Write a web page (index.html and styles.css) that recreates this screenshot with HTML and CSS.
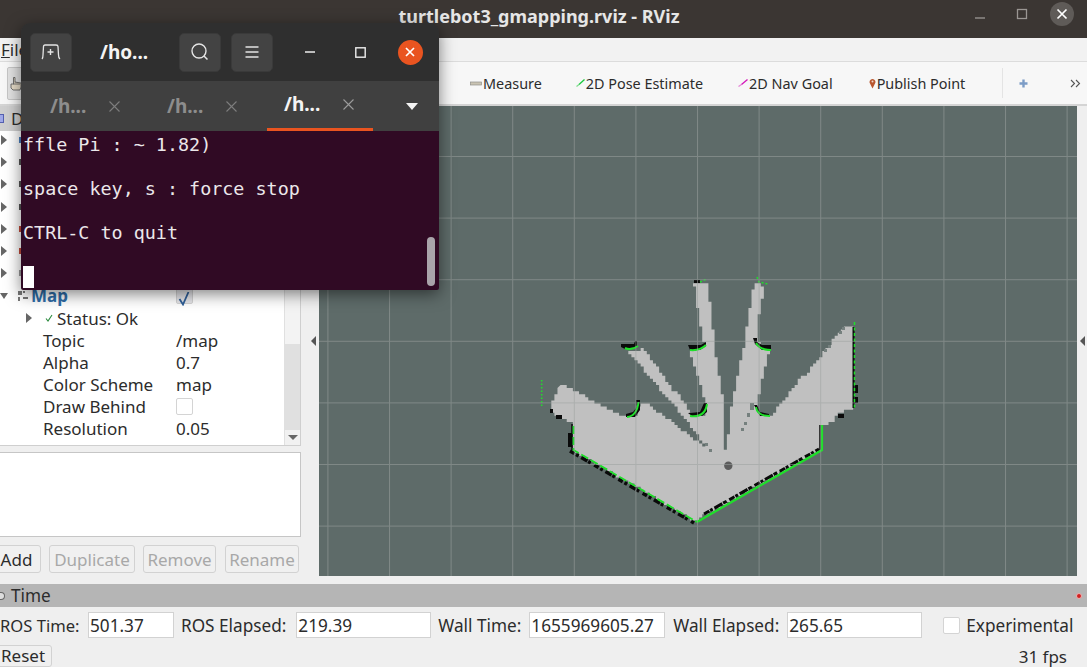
FILE: index.html
```html
<!DOCTYPE html>
<html lang="en">
<head>
  <meta charset="UTF-8">
  <title>turtlebot3_gmapping.rviz - RViz</title>
  <link rel="stylesheet" href="styles.css">
</head>
<body>

<header class="titlebar">
  <span class="titlebar-text">turtlebot3_gmapping.rviz - RViz</span>
  <div class="wm-buttons">
    <svg width="12" height="12" viewBox="0 0 12 12"><path d="M1 10H11" stroke="#8f8b88" stroke-width="1.5"/></svg>
    <svg width="12" height="12" viewBox="0 0 12 12"><rect x="1.5" y="1.5" width="9" height="9" fill="none" stroke="#9a9693" stroke-width="1.3"/></svg>
    <span class="wm-close">
      <svg width="12" height="12" viewBox="0 0 12 12"><path d="M1.5 1.5L10.5 10.5M10.5 1.5L1.5 10.5" stroke="#fff" stroke-width="1.7"/></svg>
    </span>
  </div>
</header>

<nav class="menubar"><span><u>F</u>ile</span></nav>

<div class="toolbar">
  <button class="tool-hand">
    <svg width="12" height="15" viewBox="0 0 12 15"><path d="M1 8V12L3 14H10L11 11V7L5 6V1.5H3.5V8.5M1 8H3.5M5 6.500V9M7 6.500V9M9 7V9" fill="#e6dcc8" stroke="#555" stroke-width=".8"/></svg>
  </button>
  <div class="tools">
    <span class="tool tool-measure">
      <svg width="12" height="5" viewBox="0 0 12 5"><rect x=".5" y="1" width="11" height="3" fill="#c9c3b2" stroke="#8f8f8a" stroke-width=".7"/></svg>
      Measure
    </span>
    <span class="tool">
      <svg width="9" height="8" viewBox="0 0 9 8"><path d="M.5 7.500L3 5.500" stroke="#7fdc8e" stroke-width="1.300"/><path d="M3 5.500L8.500 .5" stroke="#17c93c" stroke-width="1.300"/></svg>
      2D Pose Estimate
    </span>
    <span class="tool tool-nav">
      <svg width="10" height="8" viewBox="0 0 10 8"><path d="M.5 7.500L3.500 5.500" stroke="#e58ad8" stroke-width="1.300"/><path d="M3.500 5.500L9.500 .5" stroke="#d414b8" stroke-width="1.300"/></svg>
      2D Nav Goal
    </span>
    <span class="tool">
      <svg class="tool-pin" width="7" height="11" viewBox="0 0 7 11"><path d="M3.500 10.500L1 5.500A2.900 2.900 0 1 1 6 5.500Z" fill="#b8562e"/><circle cx="3.500" cy="3.500" r="1" fill="#f0d8c8"/></svg>
      Publish Point
    </span>
    <span class="tool-sep"></span>
    <svg class="tool-plus" width="9" height="9" viewBox="0 0 9 9"><path d="M4.500 .5V8.500M.5 4.500H8.500" stroke="#7c9cc6" stroke-width="2.400"/></svg>
    <svg class="tool-more" width="11" height="9" viewBox="0 0 11 9"><path d="M1 1L4.500 4.500L1 8M6 1L9.500 4.500L6 8" fill="none" stroke="#555" stroke-width="1.100"/></svg>
  </div>
</div>

<main class="main">
  <aside class="dock">
    <div class="dock-header"><span class="dock-icon"></span>D</div>

    <div class="tree">
      <div class="tree-body">
        <div class="tree-row"><span class="arrow-right"></span><span class="peek peek-blue"></span></div>
        <div class="tree-row"><span class="arrow-right"></span><span class="peek"></span></div>
        <div class="tree-row"><span class="arrow-right"></span><span class="peek"></span></div>
        <div class="tree-row"><span class="arrow-right"></span><span class="peek"></span></div>
        <div class="tree-row"><span class="arrow-right"></span><span class="peek peek-red"></span></div>
        <div class="tree-row"><span class="arrow-right"></span><span class="peek peek-red"></span></div>
        <div class="tree-row"><span class="arrow-right"></span><span class="peek peek-grey"></span></div>

        <div class="tree-row tree-row-map">
          <div class="tree-label">
            <span class="arrow-down"></span>
            <svg class="map-icon" width="10" height="10" viewBox="0 0 10 10"><path d="M0 0H4V4H0ZM5 0H7V2H5ZM0 6H2V10H0ZM5 6H10V8H5Z" fill="#777"/></svg>
            <span class="map-name">Map</span>
          </div>
          <span class="check check-on">
            <svg width="14" height="14" viewBox="0 0 14 14"><path d="M2.500 7L6 12.500L11.500 0" fill="none" stroke="#2f5f98" stroke-width="1.800"/></svg>
          </span>
        </div>
        <div class="tree-row">
          <div class="tree-label tree-label-status">
            <span class="arrow-right"></span>
            <svg class="status-icon" width="8" height="8" viewBox="0 0 8 8"><path d="M1 4.500L3 7L7 1" fill="none" stroke="#2b8a3e" stroke-width="1.100"/></svg>
            Status: Ok
          </div>
        </div>
        <div class="tree-row"><div class="tree-label tree-label-prop">Topic</div><span class="tree-value">/map</span></div>
        <div class="tree-row"><div class="tree-label tree-label-prop">Alpha</div><span class="tree-value">0.7</span></div>
        <div class="tree-row"><div class="tree-label tree-label-prop">Color Scheme</div><span class="tree-value">map</span></div>
        <div class="tree-row"><div class="tree-label tree-label-prop">Draw Behind</div><span class="check"></span></div>
        <div class="tree-row"><div class="tree-label tree-label-prop">Resolution</div><span class="tree-value">0.05</span></div>
        <div class="tree-row"><div class="tree-label tree-label-prop">Width</div><span class="tree-value">384</span></div>
      </div>
      <div class="scroll">
        <div class="scroll-thumb"></div>
        <div class="scroll-track"></div>
        <div class="scroll-btn"><span class="arrow-scroll"></span></div>
      </div>
    </div>

    <div class="description"></div>

    <div class="dock-buttons">
      <button class="btn btn-add">Add</button>
      <button class="btn btn-dup" disabled>Duplicate</button>
      <button class="btn btn-rem" disabled>Remove</button>
      <button class="btn btn-ren" disabled>Rename</button>
    </div>
  </aside>

  <div class="splitter"><span class="arrow-left"></span></div>

  <section class="viewport">
    <svg width="758" height="470" viewBox="319 106 758 470">
      <defs>
        <pattern id="grid" patternUnits="userSpaceOnUse" x="697" y="464" width="61.600" height="61.600">
          <path d="M0 .5H61.600M.5 0V61.600" stroke="#9aa09f" stroke-width="1" stroke-opacity=".55" fill="none"/>
        </pattern>
      </defs>

      <g class="map-cells">
        <path id="map-fill" fill="#c0c0c0"/>

        <!-- unknown cells left inside the free space -->
        <g fill="#75807e">
          <rect x="741" y="428" width="3" height="3"/>
          <rect x="744" y="422" width="3" height="3"/>
          <rect x="747" y="413" width="3" height="4"/>
          <rect x="750" y="403" width="4" height="7"/>
          <rect x="705" y="443" width="3" height="3"/>
          <rect x="709" y="449" width="3" height="3"/>
          <rect x="842" y="327" width="3" height="3"/>
          <rect x="839" y="331" width="3" height="3"/>
          <rect x="828" y="345" width="3" height="3"/>
          <rect x="824" y="349" width="3" height="3"/>
        </g>

        <!-- occupied cells -->
        <g fill="#0a0a0a">
          <path d="M621 344H634L635 341H637V346L632 349H625L621 347Z"/>
          <path d="M688 345H701L706 342V346L700 350H690Z"/>
          <path d="M753 338H757V342L762 345H771V350H762L755 344Z"/>
          <path d="M636 400H640V410L635 417H626V414L633 412L637 407Z"/>
          <path d="M688 413L700 412L704 403H707V412L702 416H692Z"/>
          <path d="M754 405H757L760 412L769 414V416H760Z"/>
          <rect x="694" y="280" width="6" height="3"/>
          <rect x="550" y="409" width="3" height="4"/>
          <rect x="556" y="415" width="6" height="4"/>
          <rect x="838" y="414" width="6" height="4"/>
          <rect x="568" y="433" width="4" height="14"/>
          <rect x="855" y="385" width="3" height="8"/>
          <rect x="855" y="397" width="3" height="6"/>
        </g>
        <g fill="none" stroke="#0a0a0a">
          <path d="M570 451L694 523" stroke-width="3.500" stroke-dasharray="5 2 3 3 7 1 3 4"/>
          <path d="M704 514L819 449" stroke-width="3" stroke-dasharray="6 1 3 2 9 1 4 3"/>
          <path d="M572 424V450" stroke-width="1.500"/>
          <path d="M853.500 327V408" stroke-width="2"/>
          <path d="M820 425V450" stroke-width="1.500"/>
        </g>

        <!-- laser scan -->
        <g fill="none" stroke="#1fe02a">
          <path d="M573.500 426V450L697 522" stroke-width="1.800" stroke-dasharray="8 3"/>
          <path d="M697 522L822 450V425" stroke-width="2.200"/>
          <path d="M854.500 322V408" stroke-width="1.500" stroke-dasharray="3 2.500"/>
          <path d="M541.700 380V408" stroke-width="1.500" stroke-dasharray="1.500 2"/>
          <path d="M625 348Q631 351 638 346" stroke-width="2"/>
          <path d="M690 350Q700 351 706 345" stroke-width="2"/>
          <path d="M756 343Q760 350 771 350" stroke-width="2"/>
          <path d="M627 417Q637 416 638.500 402" stroke-width="2"/>
          <path d="M690 416Q705 418 707 404" stroke-width="2"/>
          <path d="M756 407Q757 416 770 416" stroke-width="2"/>
          <path d="M700 282L707 279" stroke-width="1.500" stroke-dasharray="2 2"/>
          <path d="M757 277L759 282L768 284" stroke-width="1.500" stroke-dasharray="2 2"/>
        </g>

        <circle cx="728.300" cy="465.700" r="4.200" fill="#5c5c5c"/>
      </g>

      <rect x="319" y="106" width="758" height="470" fill="url(#grid)"/>
    </svg>
  </section>

  <div class="right-strip"><span class="arrow-left"></span></div>
</main>

<section class="time-panel">
  <div class="time-header">
    <span class="time-dot"></span>
    <span class="time-title">Time</span>
    <span class="time-close"></span>
  </div>
  <div class="time-row">
    <span class="time-label time-label-first">ROS Time:</span><div class="field field-ros">501.37</div>
    <span class="time-label">ROS Elapsed:</span><div class="field field-elapsed">219.39</div>
    <span class="time-label">Wall Time:</span><div class="field field-wall">1655969605.27</div>
    <span class="time-label time-label-wide">Wall Elapsed:</span><div class="field">265.65</div>
    <span class="check check-exp"></span><span class="time-label time-label-exp">Experimental</span>
  </div>
  <div class="bottom-row">
    <button class="btn btn-reset">Reset</button>
    <span class="fps">31 fps</span>
  </div>
</section>

<!-- terminal floats above the rviz window -->
<div class="terminal">
  <div class="term-head">
    <button class="term-btn">
      <svg width="20" height="18" viewBox="0 0 20 18"><path d="M1 16Q2 15 2 12L2.500 3.500Q2.500 2 4 2H15Q17 2 17 3.500L17.500 12Q17.500 15 19 16" fill="none" stroke="#e4e4e4" stroke-width="1.300"/><path d="M9.500 6V12M6.500 9H12.500" stroke="#e4e4e4" stroke-width="1.400"/></svg>
    </button>
    <span class="term-title">/ho...</span>
    <button class="term-btn term-search">
      <svg width="20" height="20" viewBox="0 0 20 20"><circle cx="9" cy="9" r="7" fill="none" stroke="#e4e4e4" stroke-width="1.400"/><path d="M14 14L17.500 17.500" stroke="#e4e4e4" stroke-width="1.500"/></svg>
    </button>
    <button class="term-btn term-menu">
      <svg width="14" height="12" viewBox="0 0 14 12"><path d="M.5 1H13.500M.5 6H13.500M.5 11H13.500" stroke="#e4e4e4" stroke-width="1.700"/></svg>
    </button>
    <div class="term-wm">
      <span class="term-wm-btn"><svg width="12" height="4" viewBox="0 0 12 4"><path d="M1 2H11" stroke="#eee" stroke-width="1.400"/></svg></span>
      <span class="term-wm-btn"><svg width="11" height="11" viewBox="0 0 11 11"><rect x=".8" y=".8" width="9.400" height="9.400" fill="none" stroke="#eee" stroke-width="1.400"/></svg></span>
      <span class="term-wm-btn">
        <span class="term-close"><svg width="10" height="10" viewBox="0 0 10 10"><path d="M1 1L9 9M9 1L1 9" stroke="#fff" stroke-width="1.700"/></svg></span>
      </span>
    </div>
  </div>

  <div class="term-tabs">
    <div class="term-tab"><span class="term-tab-name">/h...</span><svg width="11" height="11" viewBox="0 0 11 11"><path d="M.5 .5L10.500 10.500M10.500 .5L.5 10.500" stroke="#7d7d7d" stroke-width="1.100"/></svg></div>
    <div class="term-tab"><span class="term-tab-name">/h...</span><svg width="11" height="11" viewBox="0 0 11 11"><path d="M.5 .5L10.500 10.500M10.500 .5L.5 10.500" stroke="#7d7d7d" stroke-width="1.100"/></svg></div>
    <div class="term-tab term-tab-active"><span class="term-tab-name">/h...</span><svg width="11" height="11" viewBox="0 0 11 11"><path d="M.5 .5L10.500 10.500M10.500 .5L.5 10.500" stroke="#9a9a9a" stroke-width="1.100"/></svg></div>
    <span class="term-drop"></span>
  </div>

  <div class="term-body">
    <pre class="term-text">ffle Pi : ~ 1.82)

space key, s : force stop

CTRL-C to quit

<span class="term-cursor"></span></pre>
    <span class="term-scroll"></span>
  </div>
</div>

<script src="map.js"></script>
</body>
</html>
```

FILE: styles.css
```css
* {
  box-sizing: border-box;
}
html, body {
  margin: 0;
  padding: 0;
}
body {
  position: relative;
  width: 1087px;
  height: 667px;
  overflow: hidden;
  display: flex;
  flex-direction: column;
  font-family: "Noto Sans", "Open Sans", sans-serif;
  font-size: 17px;
  color: #2c2c2c;
  background-color: #efefef;
}
button {
  font-family: inherit;
  font-size: inherit;
  padding: 0;
}

/* rviz window frame */
.titlebar {
  position: relative;
  flex: none;
  height: 38px;
  display: flex;
  align-items: center;
  justify-content: center;
  background-color: #3b3633;
}
.titlebar-text {
  margin: 0 9px 6px 0;
  font-size: 18px;
  font-weight: 700;
  color: #e6e6e6;
}
.wm-buttons {
  position: absolute;
  right: 13px;
  top: 2px;
  display: flex;
  align-items: center;
  gap: 30px;
}
.wm-close {
  width: 24px;
  height: 24px;
  margin-left: -8px;
  border-radius: 50%;
  display: flex;
  align-items: center;
  justify-content: center;
  background-color: #5f5b58;
}
.menubar {
  flex: none;
  height: 24px;
  padding-left: 1px;
  line-height: 24px;
  background-color: #f2f2f2;
  border-bottom: 1px solid #dcdcdc;
}
.toolbar {
  flex: none;
  height: 44px;
  padding-left: 7px;
  display: flex;
  align-items: center;
  background-color: #f7f7f7;
  border-bottom: 2px solid #d4d4d4;
}
.tool-hand {
  width: 30px;
  height: 33px;
  display: flex;
  align-items: center;
  padding-left: 2px;
  background-color: #e2e2e2;
  border: 1px solid #c6c6c6;
  border-radius: 2px;
}
.tools {
  margin-left: 433px;
  display: flex;
  align-items: center;
}
.tool {
  display: flex;
  align-items: center;
  gap: 1px;
  margin-right: 35px;
  font-size: 14.400px;
  white-space: nowrap;
}
.tool-measure {
  margin-right: 34px;
}
.tool-nav {
  margin-right: 34px;
}
.tool-pin {
  margin-left: 2px;
}
.tool-sep {
  width: 1px;
  height: 30px;
  margin-left: 2px;
  background-color: #e4e4e4;
}
.tool-plus {
  margin-left: 16px;
}
.tool-more {
  margin-left: 42px;
}

/* main area */
.main {
  flex: none;
  height: 470px;
  display: flex;
}
.dock {
  flex: none;
  width: 301px;
  display: flex;
  flex-direction: column;
}
.dock-header {
  height: 25px;
  display: flex;
  align-items: center;
  gap: 7px;
  background-color: #cfcfcf;
}
.dock-icon {
  width: 4px;
  height: 9px;
  background-color: #9fa8e8;
  border: 1px solid #5560b0;
  border-left: none;
}
.tree {
  height: 315px;
  display: flex;
  overflow: hidden;
  background-color: #fff;
  border-bottom: 1px solid #cfcfcf;
  border-right: 1px solid #cfcfcf;
}
.tree-body {
  flex: 1;
  margin-top: -2px;
  overflow: hidden;
}
.tree-row {
  position: relative;
  height: 22.200px;
  display: grid;
  grid-template-columns: 176px 1fr;
  align-items: center;
}
.tree-label {
  display: flex;
  align-items: center;
  white-space: nowrap;
}
.tree-label-prop {
  padding-left: 43px;
}
.tree-label-status {
  padding-left: 26px;
}
.status-icon {
  margin: 0 4px 0 13px;
}
.tree-row-map .tree-label {
  font-weight: 700;
}
.map-icon {
  margin: 0 3px 0 10px;
}
.map-name {
  color: #2f6da8;
}
.arrow-right {
  width: 0;
  height: 0;
  margin-left: 1px;
  border-left: 6px solid #666;
  border-top: 5px solid transparent;
  border-bottom: 5px solid transparent;
}
.tree-label-status .arrow-right {
  margin-left: 0;
}
.arrow-down {
  width: 0;
  height: 0;
  border-top: 6px solid #666;
  border-left: 4px solid transparent;
  border-right: 4px solid transparent;
}
.peek {
  position: absolute;
  left: 19px;
  top: 8px;
  width: 2px;
  height: 6px;
  background-color: #555;
}
.peek-blue {
  background-color: #4a7fc0;
}
.peek-red {
  background-color: #c24a3a;
}
.peek-grey {
  background-color: #999;
}
.check {
  width: 17px;
  height: 17px;
  display: block;
  background-color: #fff;
  border: 1px solid #d4d4d4;
  border-radius: 2px;
}
.check-on {
  background-color: #e6e6ea;
}
.scroll {
  flex: none;
  width: 16px;
  display: flex;
  flex-direction: column;
  border-left: 1px solid #e0e0e0;
}
.scroll-thumb {
  height: 213px;
  background-color: #f3f3f3;
}
.scroll-track {
  height: 86px;
  background-color: #e0e0e0;
}
.scroll-btn {
  flex: 1;
  display: flex;
  align-items: center;
  justify-content: center;
  background-color: #f1f1f1;
}
.arrow-scroll {
  width: 0;
  height: 0;
  border-top: 5px solid #666;
  border-left: 5px solid transparent;
  border-right: 5px solid transparent;
}
.description {
  height: 85px;
  margin-top: 6px;
  background-color: #fff;
  border: 1px solid #c6c6c6;
  border-left: none;
}
.dock-buttons {
  display: flex;
  gap: 8px;
  margin-top: 8px;
}
.btn {
  height: 28px;
  color: #2c2c2c;
  font-size: 17px;
  background-color: #f0f0f0;
  border: 1px solid #d2d2d2;
  border-radius: 3px;
}
.btn:disabled {
  color: #a8a8a8;
}
.btn-add {
  width: 49px;
  margin-left: -8px;
}
.btn-dup {
  width: 86px;
}
.btn-rem {
  width: 73px;
}
.btn-ren {
  width: 74px;
  margin-left: 1px;
}
.splitter {
  flex: none;
  width: 18px;
  display: flex;
  align-items: center;
  justify-content: flex-end;
  padding-right: 3px;
}
.arrow-left {
  width: 0;
  height: 0;
  border-right: 5px solid #555;
  border-top: 5px solid transparent;
  border-bottom: 5px solid transparent;
}
.viewport {
  flex: none;
  width: 758px;
  height: 470px;
  background-color: #5e6b69;
}
.viewport svg {
  display: block;
}
.map-cells {
  filter: blur(.35px);
}
.right-strip {
  flex: 1;
  display: flex;
  align-items: center;
  justify-content: center;
}

/* time panel */
.time-panel {
  flex: none;
  margin-top: 8px;
  font-size: 17.200px;
}
.time-header {
  height: 23px;
  display: flex;
  align-items: center;
  background-color: #b5b5b5;
}
.time-dot {
  width: 5px;
  height: 8px;
  border: 1px solid #666;
  border-left: none;
  border-radius: 0 4px 4px 0;
  background-color: #ddd;
}
.time-title {
  margin-left: 6px;
}
.time-close {
  width: 6px;
  height: 6px;
  margin-left: auto;
  margin-right: 5px;
  border-radius: 50%;
  background-color: #d02020;
  border: 1px solid #f0b0b0;
}
.time-row {
  height: 26px;
  margin-top: 5px;
  display: flex;
  align-items: center;
  white-space: nowrap;
}
.time-label {
  margin-left: 7px;
}
.time-label-first {
  width: 80px;
  margin-left: 0;
  font-size: 16.600px;
}
.time-label-wide {
  margin-left: 8px;
}
.time-label-exp {
  margin-left: 6px;
}
.field {
  width: 135px;
  height: 26px;
  margin-left: 8px;
  padding-left: 1px;
  line-height: 25px;
  background-color: #fff;
  border: 1px solid #d2d2d2;
}
.field-ros {
  width: 86px;
}
.field-elapsed {
  margin-left: 10px;
}
.field-wall {
  width: 136px;
}
.check-exp {
  margin-left: 21px;
}
.bottom-row {
  height: 22px;
  margin-top: 7px;
  display: flex;
  align-items: center;
  justify-content: space-between;
}
.btn-reset {
  width: 58px;
  height: 22px;
  margin-left: -6px;
  line-height: 18px;
}
.fps {
  margin-right: 20px;
  font-size: 17px;
}

/* terminal window */
.terminal {
  position: absolute;
  left: 21px;
  top: 23px;
  width: 418px;
  height: 267px;
  display: flex;
  flex-direction: column;
  overflow: hidden;
  border-radius: 9px 9px 2px 2px;
  box-shadow: 0 4px 16px rgba(0, 0, 0, .5);
}
.term-head {
  flex: none;
  height: 58px;
  padding-left: 9px;
  display: flex;
  align-items: center;
  background-color: #2f2f2f;
}
.term-btn {
  width: 42px;
  height: 39px;
  display: flex;
  align-items: center;
  justify-content: center;
  background-color: #434343;
  border: 1px solid #3a3a3a;
  border-radius: 5px;
}
.term-title {
  width: 79px;
  margin-left: 28px;
  font-size: 19px;
  font-weight: 700;
  color: #f4f4f4;
}
.term-menu {
  margin-left: 10px;
}
.term-wm {
  margin-left: auto;
  padding-right: 4px;
  display: flex;
}
.term-wm-btn {
  width: 50px;
  display: flex;
  align-items: center;
  justify-content: center;
}
.term-close {
  width: 25px;
  height: 25px;
  border-radius: 50%;
  display: flex;
  align-items: center;
  justify-content: center;
  background-color: #e95420;
}
.term-tabs {
  flex: none;
  height: 50px;
  padding-left: 12px;
  display: flex;
  gap: 11px;
  background-color: #404040;
}
.term-tab {
  width: 106px;
  padding-left: 17px;
  display: flex;
  align-items: center;
  color: #8d8d8d;
  font-size: 19px;
  font-weight: 700;
}
.term-tab-name {
  width: 59px;
  margin-bottom: 1px;
}
.term-tab-active {
  color: #f4f4f4;
  border-bottom: 3px solid #e95420;
}
.term-drop {
  width: 0;
  height: 0;
  margin: 22px 0 0 22px;
  border-top: 7px solid #f4f4f4;
  border-left: 6px solid transparent;
  border-right: 6px solid transparent;
}
.term-body {
  position: relative;
  flex: 1;
  padding: 3px 0 0 2px;
  background-color: #300a24;
}
.term-text {
  margin: 0;
  font-family: "DejaVu Sans Mono", "Liberation Mono", monospace;
  font-size: 18.400px;
  line-height: 22px;
  color: #ebe7ea;
}
.term-cursor {
  display: inline-block;
  width: 11px;
  height: 22px;
  vertical-align: top;
  background-color: #fff;
}
.term-scroll {
  position: absolute;
  right: 4px;
  top: 106px;
  width: 8px;
  height: 49px;
  border-radius: 4px;
  background-color: #a9a4aa;
}
```

FILE: map.js
```js
// gmapping cells are 0.05 m, one metre of grid is 61.6 px on screen
const cellSize = 3.08;

const outline = [
  [559.3, 385], [623.3, 416], [630, 417.3], [637.3, 413.3], [639.3, 402.7], [643.3, 402.7],
  [711.7, 451.7], [686.7, 418.3], [629.3, 351.7], [642.7, 348.3], [690, 413.3], [705, 416.7],
  [706.7, 403.3], [690, 351.7], [706, 344], [703.3, 340], [694.3, 283.3], [706.7, 282.7],
  [712.7, 320], [713.3, 341.7], [722.7, 396.7], [725, 433], [725, 450], [728.3, 450],
  [728.3, 433], [731.7, 403.3], [743.3, 350], [746.7, 326.7], [754, 283.3], [765, 286],
  [765, 290], [756.7, 326.7], [756, 340], [770, 350], [769.3, 351.7], [756.7, 405],
  [756.7, 413.3], [770, 416.7], [823.3, 350], [845, 325], [853.3, 327.3], [853.3, 408.3],
  [836.7, 415], [831.7, 423.3], [821.7, 425], [821.7, 450], [696.7, 521], [573.3, 450],
  [571.7, 423.3], [560, 416.7], [552.7, 410], [552.7, 400]
];

function snap(value) {
  return (Math.round(value / cellSize) * cellSize).toFixed(2);
}

function stairPath(points) {
  let d = '';
  points.forEach((from, i) => {
    const to = points[(i + 1) % points.length];
    const steps = Math.ceil(Math.max(Math.abs(to[0] - from[0]), Math.abs(to[1] - from[1])) / cellSize);
    for (let k = 0; k < steps; k++) {
      const x = snap(from[0] + (to[0] - from[0]) * k / steps);
      const y = snap(from[1] + (to[1] - from[1]) * k / steps);
      d += d ? `H${x}V${y}` : `M${x} ${y}`;
    }
  });
  return d + 'Z';
}

document.getElementById('map-fill').setAttribute('d', stairPath(outline));
```
